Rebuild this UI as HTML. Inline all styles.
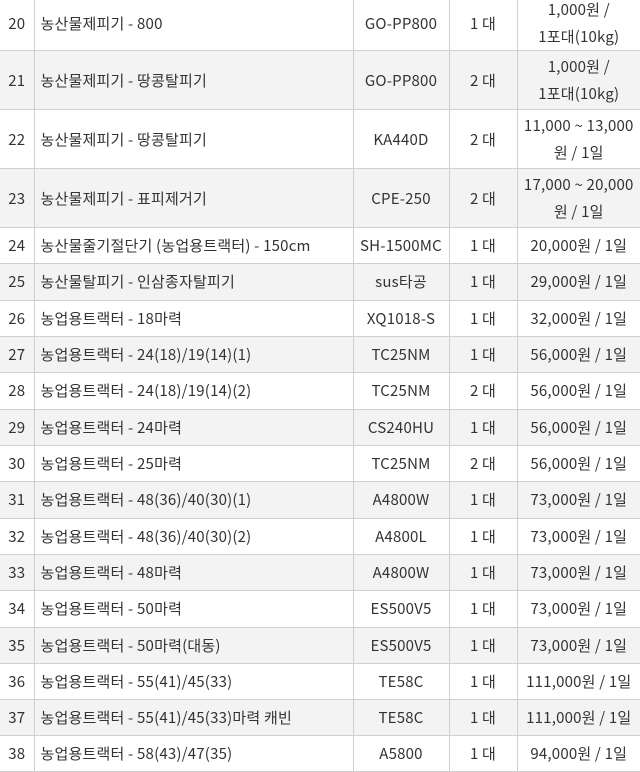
<!DOCTYPE html>
<html><head><meta charset="utf-8"><style>
html,body{margin:0;padding:0;background:#fff;width:640px;height:769px;overflow:hidden}
table{position:absolute;top:-4px;left:0;width:640px;border-collapse:collapse;table-layout:fixed;font-family:"Noto Sans CJK KR","Liberation Sans",sans-serif;font-size:15px;color:#333;letter-spacing:0.2px}
td{border:1px solid #cfcfcf;text-align:center;padding:0 1px;height:36px;line-height:22px;box-sizing:border-box;vertical-align:middle;white-space:nowrap}
tr.t td{height:59px;line-height:27px}
tr.f td{height:53px;line-height:27px;border-top:none}
tr.b td{height:37px}
tr:nth-child(even) td{background:#f3f3f3}
td:nth-child(2){text-align:left;padding-left:6px}
td:first-child{border-left:none}
td:last-child{border-right:none}
</style></head><body>
<table>
<colgroup><col style="width:34px"><col style="width:319px"><col style="width:96px"><col style="width:68px"><col style="width:123px"></colgroup>
<tr class="f"><td>20</td><td>농산물제피기 - 800</td><td>GO-PP800</td><td>1 대</td><td>1,000원 /<br>1포대(10kg)</td></tr>
<tr class="t"><td>21</td><td>농산물제피기 - 땅콩탈피기</td><td>GO-PP800</td><td>2 대</td><td>1,000원 /<br>1포대(10kg)</td></tr>
<tr class="t"><td>22</td><td>농산물제피기 - 땅콩탈피기</td><td>KA440D</td><td>2 대</td><td>11,000 ~ 13,000<br>원 / 1일</td></tr>
<tr class="t"><td>23</td><td>농산물제피기 - 표피제거기</td><td>CPE-250</td><td>2 대</td><td>17,000 ~ 20,000<br>원 / 1일</td></tr>
<tr><td>24</td><td>농산물줄기절단기 (농업용트랙터) - 150cm</td><td>SH-1500MC</td><td>1 대</td><td>20,000원 / 1일</td></tr>
<tr class="b"><td>25</td><td>농산물탈피기 - 인삼종자탈피기</td><td>sus타공</td><td>1 대</td><td>29,000원 / 1일</td></tr>
<tr><td>26</td><td>농업용트랙터 - 18마력</td><td>XQ1018-S</td><td>1 대</td><td>32,000원 / 1일</td></tr>
<tr><td>27</td><td>농업용트랙터 - 24(18)/19(14)(1)</td><td>TC25NM</td><td>1 대</td><td>56,000원 / 1일</td></tr>
<tr class="b"><td>28</td><td>농업용트랙터 - 24(18)/19(14)(2)</td><td>TC25NM</td><td>2 대</td><td>56,000원 / 1일</td></tr>
<tr><td>29</td><td>농업용트랙터 - 24마력</td><td>CS240HU</td><td>1 대</td><td>56,000원 / 1일</td></tr>
<tr><td>30</td><td>농업용트랙터 - 25마력</td><td>TC25NM</td><td>2 대</td><td>56,000원 / 1일</td></tr>
<tr class="b"><td>31</td><td>농업용트랙터 - 48(36)/40(30)(1)</td><td>A4800W</td><td>1 대</td><td>73,000원 / 1일</td></tr>
<tr><td>32</td><td>농업용트랙터 - 48(36)/40(30)(2)</td><td>A4800L</td><td>1 대</td><td>73,000원 / 1일</td></tr>
<tr><td>33</td><td>농업용트랙터 - 48마력</td><td>A4800W</td><td>1 대</td><td>73,000원 / 1일</td></tr>
<tr class="b"><td>34</td><td>농업용트랙터 - 50마력</td><td>ES500V5</td><td>1 대</td><td>73,000원 / 1일</td></tr>
<tr><td>35</td><td>농업용트랙터 - 50마력(대동)</td><td>ES500V5</td><td>1 대</td><td>73,000원 / 1일</td></tr>
<tr><td>36</td><td>농업용트랙터 - 55(41)/45(33)</td><td>TE58C</td><td>1 대</td><td>111,000원 / 1일</td></tr>
<tr><td>37</td><td>농업용트랙터 - 55(41)/45(33)마력 캐빈</td><td>TE58C</td><td>1 대</td><td>111,000원 / 1일</td></tr>
<tr><td>38</td><td>농업용트랙터 - 58(43)/47(35)</td><td>A5800</td><td>1 대</td><td>94,000원 / 1일</td></tr>
</table>
</body></html>
